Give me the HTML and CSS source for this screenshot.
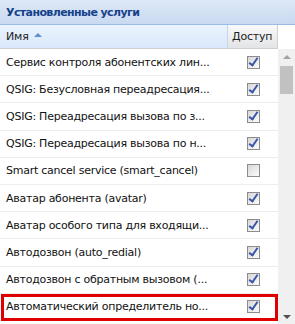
FILE: index.html
```html
<!DOCTYPE html>
<html>
<head>
<meta charset="utf-8">
<link rel="stylesheet" href="styles.css">
</head>
<body>
<div class="panel">
  <div class="title">Установленные услуги</div>
  <div class="grid">
    <div class="main">
      <div class="head">
        <div class="hcell name">Имя <span class="sort"></span></div>
        <div class="hcell access">Доступ</div>
      </div>
      <div class="rows">
        <div class="row"><div class="cell name">Сервис контроля абонентских лин...</div><div class="cell access"><span class="cb on"></span></div></div>
        <div class="row"><div class="cell name">QSIG: Безусловная переадресация...</div><div class="cell access"><span class="cb on"></span></div></div>
        <div class="row"><div class="cell name">QSIG: Переадресация вызова по з...</div><div class="cell access"><span class="cb on"></span></div></div>
        <div class="row"><div class="cell name">QSIG: Переадресация вызова по н...</div><div class="cell access"><span class="cb on"></span></div></div>
        <div class="row"><div class="cell name">Smart cancel service (smart_cancel)</div><div class="cell access"><span class="cb"></span></div></div>
        <div class="row"><div class="cell name">Аватар абонента (avatar)</div><div class="cell access"><span class="cb on"></span></div></div>
        <div class="row"><div class="cell name">Аватар особого типа для входящи...</div><div class="cell access"><span class="cb on"></span></div></div>
        <div class="row"><div class="cell name">Автодозвон (auto_redial)</div><div class="cell access"><span class="cb on"></span></div></div>
        <div class="row"><div class="cell name">Автодозвон с обратным вызовом (...</div><div class="cell access"><span class="cb on"></span></div></div>
        <div class="row sel"><div class="cell name">Автоматический определитель но...</div><div class="cell access"><span class="cb on"></span></div></div>
      </div>
    </div>
    <div class="scroll">
      <div class="hfill"></div>
      <div class="track">
        <span class="arr up"></span>
        <span class="thumb"></span>
        <span class="spacer"></span>
        <span class="arr down"></span>
      </div>
    </div>
  </div>
</div>
</body>
</html>
```
FILE: styles.css
```css
* { box-sizing: border-box; }
html, body { margin: 0; padding: 0; background: #fff; }
body { font-family: Tahoma, "DejaVu Sans", sans-serif; font-size: 11px; color: #000; overflow: hidden; }
.panel { width: 295px; height: 324px; display: flex; flex-direction: column; }
.title {
  height: 25px; padding: 6px 0 0 6px;
  background: linear-gradient(#dde8f7, #c9d9f0);
  border-bottom: 1px solid #99bbe8;
  color: #15428b; font-weight: bold; font-size: 11px;
  letter-spacing: -0.6px;
}
.grid { flex: 1; display: flex; min-height: 0; }
.main { width: 278px; display: flex; flex-direction: column; }
.head { height: 24px; display: flex; border-bottom: 1px solid #d0d0d0; }
.hcell { padding: 5px 0 0 6px; letter-spacing: -0.2px; color: #222; }
.hcell.name { width: 228px; background: linear-gradient(#ebf3fd, #d9e8fb); border-right: 1px solid #c6d6ec; display: flex; align-items: flex-start; gap: 5px; }
.hcell.access { flex: 1; background: linear-gradient(#f9f9f9, #e3e4e6); border-right: 1px solid #d0d0d0; padding-left: 4px; }
.sort { width: 0; height: 0; margin-top: 3px; border-left: 4px solid transparent; border-right: 4px solid transparent; border-bottom: 4px solid #5f8fcc; }
.rows { display: flex; flex-direction: column; }
.row { height: 27.2px; display: flex; border-bottom: 1px solid #ededed; position: relative; }
.cell { display: flex; align-items: center; }
.cell.name { width: 228px; padding-left: 6px; white-space: nowrap; overflow: hidden; letter-spacing: -0.25px; color: #111; }
.cell.access { flex: 1; justify-content: center; padding-left: 1px; }
.cb { width: 13px; height: 13px; border: 1px solid #8c8c8c; background: linear-gradient(135deg, #d8d8d8, #fbfbfb); position: relative; }
.cb.on::after { content: ""; position: absolute; left: 3px; top: -1px; width: 3px; height: 8px; border-right: 2px solid #3a55a8; border-bottom: 2px solid #3a55a8; transform: rotate(35deg); }
.row.sel::after { content: ""; position: absolute; left: 1px; right: 0; top: 0; bottom: -1px; border: 3px solid #e00000; }
.scroll { flex: 1; display: flex; flex-direction: column; }
.hfill { height: 24px; background: #fff; }
.track { flex: 1; background: #f0f0f0; display: flex; flex-direction: column; align-items: center; padding: 6px 0 5px; }
.arr { width: 0; height: 0; border-left: 4px solid transparent; border-right: 4px solid transparent; }
.arr.up { border-bottom: 4px solid #a3a3a3; }
.arr.down { border-top: 4px solid #505050; }
.thumb { width: 13px; height: 28px; background: #c1c1c1; margin-top: 7px; }
.spacer { flex: 1; }
```
